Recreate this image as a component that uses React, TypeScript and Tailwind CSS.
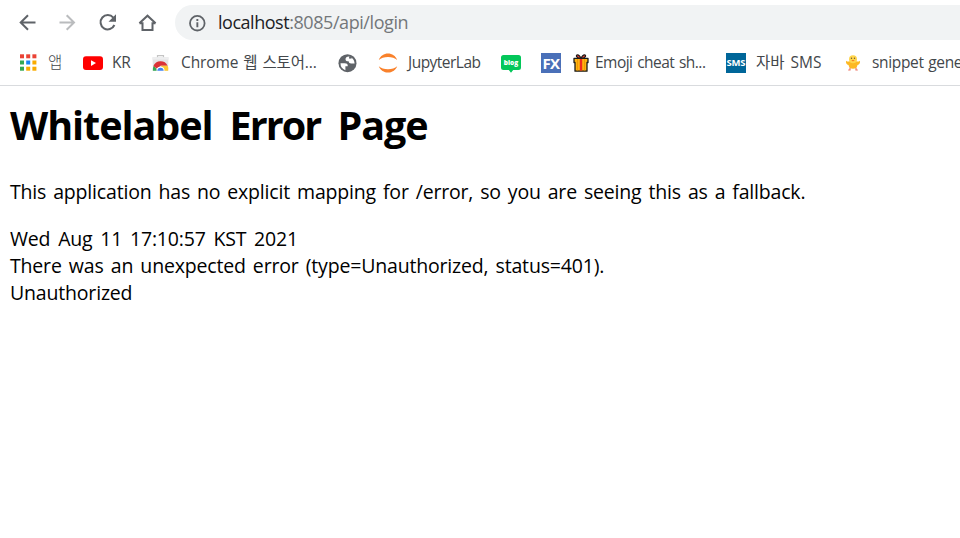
import type { ReactNode } from "react";

function Back() {
  return (
    <svg className="w-[20px] h-[20px] shrink-0" viewBox="0 0 20 20" fill="none" stroke="#5f6368" strokeWidth="2">
      <path d="M18.500 10.500H4M11 3.200L3.700 10.500l7.300 7.300" />
    </svg>
  );
}

function Forward() {
  return (
    <svg className="w-[20px] h-[20px] shrink-0" viewBox="0 0 20 20" fill="none" stroke="#babcbe" strokeWidth="2">
      <path d="M2.500 10.500H17M9.700 3.200l7.300 7.300-7.300 7.300" />
    </svg>
  );
}

function Reload() {
  return (
    <svg className="w-[20px] h-[20px] shrink-0" viewBox="0 0 20 20">
      <path d="M16.300 5.600A7.200 7.200 0 1 0 17.400 13" fill="none" stroke="#5f6368" strokeWidth="2" />
      <path d="M19 2.300v7.500h-7.500z" fill="#5f6368" />
    </svg>
  );
}

function Home() {
  return (
    <svg className="w-[20px] h-[20px] shrink-0" viewBox="0 0 20 20" fill="none" stroke="#5f6368" strokeWidth="2">
      <path d="M2.500 11.300h3v6.700h10v-6.700h3M2.400 11.300l8.100-7.600 8.100 7.600" />
    </svg>
  );
}

function Info() {
  return (
    <svg className="w-[18px] h-[18px] shrink-0" viewBox="0 0 18 18">
      <circle cx="9.300" cy="9.200" r="7.300" fill="none" stroke="#5f6368" strokeWidth="1.800" />
      <path d="M8.400 8.200h1.900v5.100H8.400zM8.400 5h1.900v1.900H8.400z" fill="#5f6368" />
    </svg>
  );
}

const dots = ["#ea4335", "#ea4335", "#ea4335", "#34a853", "#1a85f4", "#f9ab00", "#34a853", "#f9ab00", "#f9ab00"];

function Apps() {
  return (
    <svg className="w-[20px] h-[20px]" viewBox="0 0 20 20">
      {dots.map((c, i) => (
        <rect key={i} x={(i % 3) * 6.2} y={1.3 + Math.floor(i / 3) * 6.2} width="4" height="4" fill={c} />
      ))}
    </svg>
  );
}

function Youtube() {
  return (
    <svg className="w-[20px] h-[20px]" viewBox="0 0 20 20">
      <rect y="3.200" width="20" height="13.700" rx="3" fill="#f00" />
      <path d="M8 7.200v5.800l5-2.900z" fill="#fff" />
    </svg>
  );
}

function WebStore() {
  return (
    <svg className="w-[20px] h-[20px]" viewBox="0 0 20 20">
      <path d="M6.500 5V2.600h6V5" fill="none" stroke="#c4c4c4" strokeWidth="1.200" />
      <path d="M1.500 4.300h16l-.5 13.500H2z" fill="#e3e4e5" />
      <path d="M1.500 4.300h16v2.200h-16z" fill="#eeeeef" />
      <path d="M1.800 17.800a8 8 0 0 1 1-5.100l4.200 5.100z" fill="#34a853" />
      <path d="M2.400 13.100a7.800 7.800 0 0 1 14.200-.4H9.500L6 15.800z" fill="#db3236" />
      <path d="M10 12.700h6.700a8 8 0 0 1 .5 5.100h-5z" fill="#fcc934" />
      <path d="M5.400 17.800a4.100 4.100 0 0 1 8.200 0z" fill="#fff" />
      <path d="M6.400 17.800a3.100 3.100 0 0 1 6.200 0z" fill="#4285f4" />
    </svg>
  );
}

function Globe() {
  return (
    <svg className="w-[20px] h-[20px]" viewBox="0 0 20 20">
      <circle cx="9.500" cy="10.200" r="9" fill="#5f6368" />
      <path d="M2.500 10.300h4.200c2 0 3 .8 3 2.300v.7H7.400v3.900a7.200 7.200 0 0 1-4.900-6.900z" fill="#fff" />
      <path d="M10.900 3.400C8.700 3.600 7.500 4.600 7.500 6.200c0 1.700 1.400 2 3.100 2 .3 1.500 1 2.200 2.500 2.200h3.500c-.1-3.400-2.200-6.300-5.700-7z" fill="#fff" />
      <path d="M11.100 3.400h2.500v2.200h-2.500z" fill="#5f6368" />
    </svg>
  );
}

function Jupyter() {
  return (
    <svg className="w-[20px] h-[20px]" viewBox="0 0 20 20" fill="#f9812b">
      <path d="M.8 7C2.400 3 6 .6 10 .6S17.600 3 19.200 7C17 5 13.800 4 10 4S3 5 .8 7z" />
      <path d="M.8 13.300c1.600 4 5.200 6.300 9.200 6.300s7.600-2.300 9.200-6.300c-2.200 2-5.400 3-9.200 3s-7-1-9.200-3z" />
    </svg>
  );
}

function Blog() {
  return (
    <svg className="w-[20px] h-[20px]" viewBox="0 0 20 20">
      <path d="M2.500 2h15A2.500 2.500 0 0 1 20 4.500v10a2.500 2.500 0 0 1-2.500 2.500h-5.300L10 19.700 7.800 17H2.500A2.500 2.500 0 0 1 0 14.500v-10A2.500 2.500 0 0 1 2.500 2z" fill="#03c75a" />
      <text x="10" y="12" textAnchor="middle" textLength="14.500" fontSize="6.500" fontWeight="800" fontFamily="Open Sans, sans-serif" fill="#fff">blog</text>
    </svg>
  );
}

function Gift() {
  return (
    <svg className="w-[16px] h-[20px]" viewBox="0 0 16 20" strokeLinejoin="round">
      <path d="M8 5.500C3 5.500 2.500 1.800 4.500 1.800S8 5.500 8 5.500s1.500-3.700 3.500-3.700S13 5.500 8 5.500z" fill="#f44336" stroke="#1c1c1c" strokeWidth="1.200" />
      <path d="M1 5.300h14v4.200h-1v8.700H2V9.500H1z" fill="#ffb30f" stroke="#1c1c1c" strokeWidth="1.300" />
      <path d="M4.500 6v11.500M11.500 6v11.500" stroke="#ec9200" strokeWidth=".8" />
      <path d="M6.800 6h2.400v11.600H6.800z" fill="#f02b20" />
    </svg>
  );
}

function Chick() {
  return (
    <svg className="w-[16px] h-[20px]" viewBox="0 0 16 20">
      <path d="M5 14.500v2.500H3.200M11 14.500v2.500h1.800" fill="none" stroke="#ed7764" strokeWidth="1.200" />
      <path d="M1 7.700c1.200 1 2.500 1 3.700.5h6.600c1.200.5 2.500.5 3.700-.5.3 2.200-.5 4-2.500 4.300-.5 2.700-2 3.800-4.500 3.800s-4-1.100-4.500-3.800C1.500 11.700.7 9.900 1 7.700z" fill="#fdb822" />
      <circle cx="8" cy="6.200" r="4" fill="#ffd54c" />
      <circle cx="6.500" cy="5.200" r=".7" fill="#685836" />
      <circle cx="9.500" cy="5.200" r=".7" fill="#685836" />
      <path d="M6.300 6.900h3.400L8 8.500z" fill="#f57c20" />
    </svg>
  );
}

function Badge({ children, className }: { children: string; className: string }) {
  return (
    <span className={"flex h-[20px] w-[20px] items-center justify-center overflow-hidden font-bold leading-none text-white " + className}>
      {children}
    </span>
  );
}

function Bookmark({ icon, label, className, text }: { icon: ReactNode; label?: string; className: string; text?: string }) {
  return (
    <div className={"flex shrink-0 items-center " + className}>
      <span className="shrink-0">{icon}</span>
      {label && <span className={"-mt-[2px] whitespace-nowrap " + text}>{label}</span>}
    </div>
  );
}

export default function App() {
  return (
    <div className="h-[538px] w-[960px] overflow-hidden bg-white font-['Open_Sans','Noto_Sans_CJK_KR',sans-serif]">
      <header className="h-[86px] border-b border-[#d9dbde]">
        <div className="flex h-[45px] items-center pl-[17px]">
          <div className="flex w-[158px] gap-[20px] pb-[2px]">
            <Back />
            <Forward />
            <Reload />
            <Home />
          </div>
          <div className="flex h-[35px] flex-1 items-center rounded-l-full bg-[#f1f3f4] pl-[13px]">
            <Info />
            <span className="-mt-px ml-[12px] text-[18px] leading-[24px] tracking-[-0.43px] text-[#73777a]">
              <span className="text-[#202124] tracking-[-0.47px]">localhost</span>:8085/api/login
            </span>
          </div>
        </div>
        <nav className="flex h-[36px] items-center pl-[20px] text-[15.500px] leading-[20px] text-[#43474b]">
          <Bookmark className="w-[63px]" icon={<Apps />} label="앱" text="ml-[8px] font-light" />
          <Bookmark className="w-[68px]" icon={<Youtube />} label="KR" text="ml-[9px] tracking-[-0.3px]" />
          <Bookmark className="w-[187px]" icon={<WebStore />} label="Chrome 웹 스토어..." text="ml-[10px] tracking-[-0.1px] [word-spacing:1px]" />
          <Bookmark className="w-[40px]" icon={<Globe />} />
          <Bookmark className="w-[123px]" icon={<Jupyter />} label="JupyterLab" text="ml-[10px] tracking-[-0.52px]" />
          <Bookmark className="w-[40px]" icon={<Blog />} />
          <Bookmark className="w-[32px]" icon={<Badge className="bg-[#4a70b8] text-[15px] tracking-[-0.5px]">FX</Badge>} />
          <Bookmark className="w-[153px]" icon={<Gift />} label="Emoji cheat sh..." text="ml-[6px] tracking-[-0.53px] [word-spacing:1.200px]" />
          <Bookmark className="w-[119px]" icon={<Badge className="bg-[#006699] text-[9.500px] tracking-[-0.2px]">SMS</Badge>} label="자바 SMS" text="ml-[10px] [word-spacing:2px]" />
          <Bookmark className="w-[115px]" icon={<Chick />} label="snippet gene" text="ml-[11px] tracking-[-0.350px] [word-spacing:1px]" />
        </nav>
      </header>
      <main className="pl-[10px] pt-[12px] text-black">
        <h1 className="whitespace-nowrap text-[39.500px] font-bold leading-[54px] tracking-[-1.050px] [word-spacing:7.800px]">
          Whitelabel <span className="tracking-[-1.900px]">Error</span> Page
        </h1>
        <p className="mt-[26px] whitespace-nowrap text-[19.500px] leading-[27px] tracking-[-0.180px] [word-spacing:2.100px]">
          This application has no explicit mapping for /error, so you are seeing this as a fallback.
        </p>
        <div className="mt-[20px] whitespace-nowrap text-[19.500px] leading-[27px] tracking-[-0.18px]">
          <div className="[word-spacing:2.900px]">Wed Aug 11 17:10:57 KST 2021</div>
          <div className="[word-spacing:2.300px]">There was an unexpected error (type=Unauthorized, status=401).</div>
          <div>Unauthorized</div>
        </div>
      </main>
    </div>
  );
}
